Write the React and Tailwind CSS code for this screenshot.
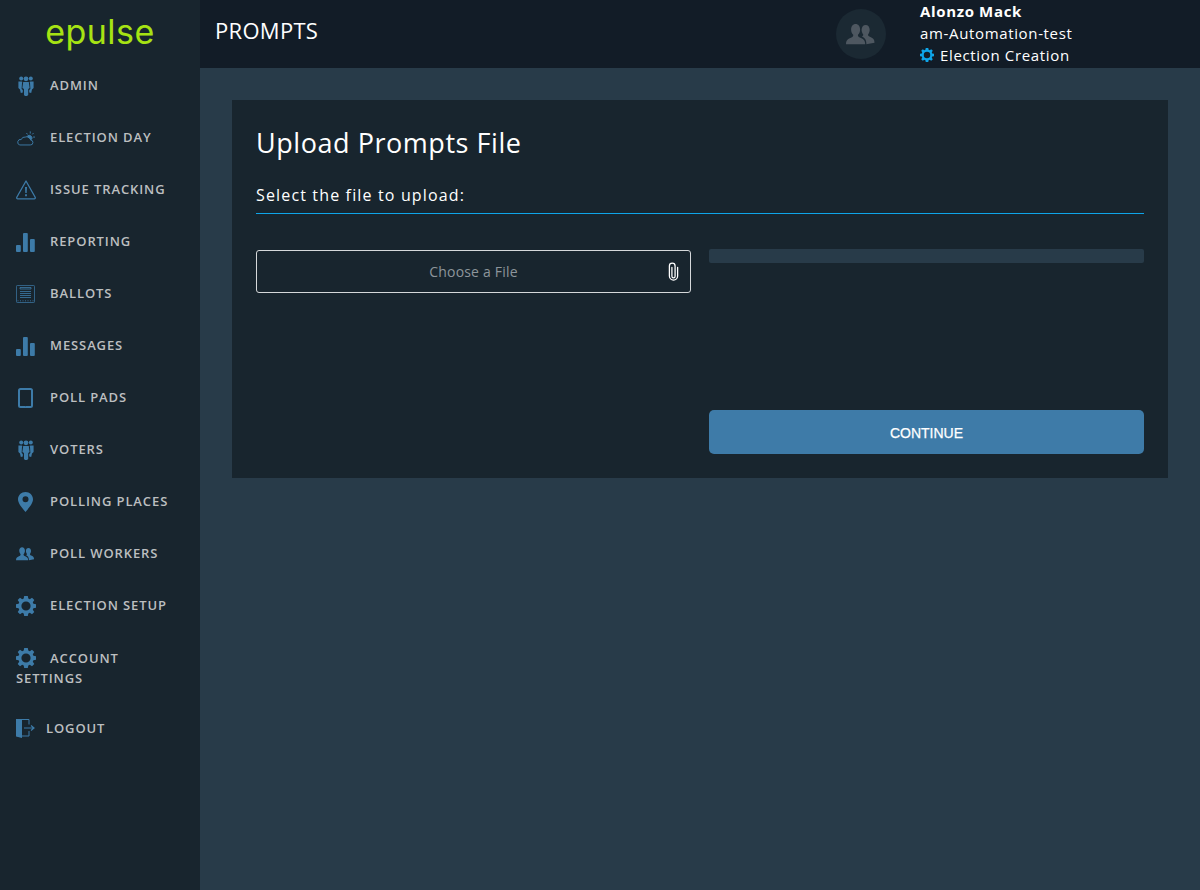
import React from "react";

function Gear({ className }) {
  return (
    <svg viewBox="0 0 20 20" className={className} fill="currentColor">
      <path
        fillRule="evenodd"
        d="M8.200 0h3.600l.5 2.600 1.500.6L16 1.700l2.300 2.300-1.500 2.200.6 1.500 2.600.5v3.600l-2.600.5-.6 1.500 1.500 2.200-2.300 2.300-2.200-1.500-1.500.6-.5 2.600H8.200l-.5-2.600-1.500-.6L4 18.300 1.700 16l1.500-2.200-.6-1.500L0 11.800V8.200l2.600-.5.6-1.500L1.700 4 4 1.700l2.200 1.500 1.500-.6zM10 5.400a4.600 4.600 0 1 0 0 9.200 4.600 4.600 0 0 0 0-9.200z"
      />
    </svg>
  );
}

function Group({ className }) {
  return (
    <svg viewBox="0 0 20 14" className={className} fill="currentColor">
      <path d="M0 13.500c0-3 1.500-3.600 3.600-4.500 1-.4 1.400-1 1.200-1.800C3.900 6.200 3.400 5 3.400 3.600 3.400 1.400 4.700 0 6.400 0s3 1.400 3 3.600c0 1.400-.5 2.600-1.400 3.600-.2.8.2 1.400 1.200 1.800 2.100.9 3.600 1.500 3.600 4.500z" />
      <path d="M13.600 13.500c0-2.900-.9-4.200-3-5.200.6-.3 1-.7.9-1.300-.7-.8-1.100-1.900-1.100-3.100 0-2 1.100-3.300 2.700-3.300s2.700 1.300 2.700 3.300c0 1.200-.4 2.300-1.100 3.100-.1.700.3 1.100 1.200 1.500 1.900.8 3.100 1.400 3.100 4z" />
    </svg>
  );
}

function Crowd({ className }) {
  return (
    <svg viewBox="0 0 16 20" className={className} fill="currentColor">
      <circle cx="3.200" cy="2.600" r="2" />
      <circle cx="12.800" cy="2.600" r="2" />
      <circle cx="8" cy="2.800" r="2.400" />
      <path d="M5.200 6h5.600l.8 6-1.400 1v6l-1.200 1H7l-1-1v-6l-1.600-1z" />
      <path d="M.4 5.500h3.200l.8.6-.4 1L3.600 13l1.200 1v2.500l-2 .5-.8-3.500L.4 12z" />
      <path d="M15.600 5.500h-3.200l-.8.6.4 1 .4 5.900-1.200 1v2.500l2 .5.8-3.500 1.600-1.500z" />
    </svg>
  );
}

function Cloud({ className }) {
  return (
    <svg viewBox="0 0 20 15" className={className} fill="none" stroke="currentColor" strokeWidth="1">
      <path d="M4 14.300h11a2.600 2.600 0 0 0 .4-5.200A3.900 3.900 0 0 0 9.800 6 3.900 3.900 0 0 0 5.500 8.600 2.900 2.900 0 0 0 4 14.300z" />
      <path fill="currentColor" d="M12.500 4.500a3 3 0 0 1 4.200 3.600l-1.300.6a3.800 3.800 0 0 0-2.900-2.500z" />
      <path d="M15 0v2.300M18.500 1.700l-1.400 1.500M20 6h-2M11 1.700l1.100 1.500" />
    </svg>
  );
}

function Warning({ className }) {
  return (
    <svg viewBox="0 0 20 20" className={className} fill="none">
      <path stroke="currentColor" strokeWidth="1.300" strokeLinejoin="round" d="M10 1 .8 17.200c-.3.8.1 1.600 1 1.600h16.400c.9 0 1.300-.8 1-1.600z" />
      <path fill="currentColor" d="M9 7h2l-.3 6H9.300zM9.100 14.300h1.800v2H9.100z" />
    </svg>
  );
}

function Bars({ className }) {
  return (
    <svg viewBox="0 0 19 19" className={className} fill="currentColor">
      <rect x="0" y="12" width="4.800" height="7" rx="1" />
      <rect x="7" y="0" width="4.800" height="19" rx="1" />
      <rect x="14" y="6" width="4.800" height="13" rx="1" />
    </svg>
  );
}

function Ballot({ className }) {
  return (
    <svg viewBox="0 0 19 18" className={className} fill="none" stroke="currentColor" strokeWidth="0.8">
      <rect x="0.400" y="0.400" width="18.200" height="17.200" rx="1.200" />
      <path d="M4 2.500h11v1.500H4zM4 6.500h11M4 8.500h11M4 10.500h11M4 12.500h11" />
      <path strokeDasharray="1 1.500" d="M1.500 15.800h16" />
    </svg>
  );
}

function Tablet({ className }) {
  return (
    <svg viewBox="0 0 15 20" className={className} fill="none">
      <rect x="1" y="1" width="13" height="18" rx="1.500" stroke="currentColor" strokeWidth="2" />
      <circle cx="7.500" cy="17.500" r="0.800" fill="#18252e" />
    </svg>
  );
}

function Pin({ className }) {
  return (
    <svg viewBox="0 0 15 20" className={className} fill="currentColor">
      <path fillRule="evenodd" d="M7.500 0C3.300 0 0 3.200 0 7.300 0 12 5.300 17.200 7.500 20 9.700 17.200 15 12 15 7.300 15 3.200 11.700 0 7.500 0zm0 4.300a3 3 0 1 1 0 6 3 3 0 0 1 0-6z" />
    </svg>
  );
}

function Logout({ className }) {
  return (
    <svg viewBox="0 0 19 19" className={className}>
      <path fill="currentColor" d="M0 0h6v19l-6-1.500z" />
      <path fill="none" stroke="currentColor" strokeWidth="1" d="M6 .5h7v5M13 12v5H6" />
      <path fill="none" stroke="currentColor" strokeWidth="1.200" d="M8 9h10M15 6.500 18 9l-3 2.500" />
    </svg>
  );
}

function Clip({ className }) {
  return (
    <svg viewBox="0 0 10 18" className={className} fill="none" stroke="currentColor" strokeWidth="1.200" strokeLinecap="round">
      <path d="M3.500 5v8.500a1.500 1.500 0 0 0 3 0V3.800a2.700 2.700 0 0 0-5.400 0v9.400a3.900 3.900 0 0 0 7.800 0V5" />
    </svg>
  );
}

const navItems = [
  { label: "ADMIN", icon: Crowd, iconClass: "w-[16px] h-[20px] ml-[2px] mr-[16px]" },
  { label: "ELECTION DAY", icon: Cloud, iconClass: "w-[19px] h-[15px] mr-[15px]" },
  { label: "ISSUE TRACKING", icon: Warning, iconClass: "w-[20px] h-[20px] mr-[14px]" },
  { label: "REPORTING", icon: Bars, iconClass: "w-[19px] h-[19px] mr-[15px]" },
  { label: "BALLOTS", icon: Ballot, iconClass: "w-[19px] h-[18px] mr-[15px]" },
  { label: "MESSAGES", icon: Bars, iconClass: "w-[19px] h-[19px] mr-[15px]" },
  { label: "POLL PADS", icon: Tablet, iconClass: "w-[15px] h-[20px] ml-[2px] mr-[17px]" },
  { label: "VOTERS", icon: Crowd, iconClass: "w-[16px] h-[20px] ml-[2px] mr-[16px]" },
  { label: "POLLING PLACES", icon: Pin, iconClass: "w-[15px] h-[20px] ml-[2px] mr-[17px]" },
  { label: "POLL WORKERS", icon: Group, iconClass: "w-[19px] h-[14px] mr-[15px]" },
  { label: "ELECTION SETUP", icon: Gear, iconClass: "w-[20px] h-[20px] mr-[14px]" },
];

function NavItem({ item }) {
  const Icon = item.icon;
  return (
    <div className="flex h-[52px] items-center pl-[16px] text-[13px] font-semibold tracking-[0.9px] text-[#bcbfc0]">
      <Icon className={`${item.iconClass} shrink-0 text-[#3d7ba8]`} />
      <span>{item.label}</span>
    </div>
  );
}

export default function App() {
  return (
    <div className="flex h-[890px] w-[1200px] overflow-hidden bg-[#283b49] font-['Open_Sans',sans-serif]">
      <aside className="w-[200px] shrink-0 bg-[#18252e]">
        <div className="flex h-[60px] items-start justify-center pt-[12px]">
          <span className="font-['Inter',sans-serif] text-[34px] leading-[40px] font-normal tracking-[0.5px] text-[#a6e313]">
            epulse
          </span>
        </div>
        {navItems.map((item) => (
          <NavItem key={item.label} item={item} />
        ))}
        <div className="px-[16px] pt-[16px] text-[13px] leading-[20px] font-semibold tracking-[0.9px] text-[#bcbfc0]">
          <Gear className="mr-[14px] inline-block h-[20px] w-[20px] align-top text-[#3d7ba8]" />
          ACCOUNT SETTINGS
        </div>
        <div className="mt-[31px] flex items-center pl-[16px] text-[13px] font-semibold tracking-[0.9px] text-[#bcbfc0]">
          <Logout className="mr-[11px] h-[19px] w-[19px] text-[#3d7ba8]" />
          <span>LOGOUT</span>
        </div>
      </aside>

      <div className="flex min-w-0 flex-1 flex-col">
        <header className="flex h-[68px] shrink-0 items-center bg-[#121c27] pl-[15px]">
          <h1 className="flex-1 pb-[8px] text-[22px] leading-[30px] tracking-[0.3px] text-white">PROMPTS</h1>
          <div className="mr-[34px] flex h-[50px] w-[50px] items-center justify-center rounded-full bg-[#1b2933]">
            <Group className="h-[21px] w-[30px] text-[#4e5760]" />
          </div>
          <div className="mb-[2px] w-[280px] text-[15px] leading-[22px] tracking-[0.65px] text-white">
            <div className="font-bold">Alonzo Mack</div>
            <div>am-Automation-test</div>
            <div className="flex items-center">
              <Gear className="mr-[6px] h-[14px] w-[14px] text-[#0ea5e9]" />
              Election Creation
            </div>
          </div>
        </header>

        <main className="flex-1 px-[32px] pt-[32px]">
          <section className="h-[378px] bg-[#18252e] px-[24px]">
            <h2 className="pt-[24px] text-[27px] leading-[38px] tracking-[0.55px] text-white">Upload Prompts File</h2>
            <div className="mt-[22px] border-b border-[#0ea5e9] pb-[7px] text-[16px] leading-[22px] tracking-[1.15px] text-white">
              Select the file to upload:
            </div>
            <div className="mt-[36px] flex gap-[18px]">
              <div className="flex h-[43px] w-[435px] items-center rounded-[3px] border border-[#d5d8da] pr-[11px] pl-[22px] text-[14px] tracking-[0.2px] text-[#8d959b]">
                <span className="flex-1 text-center">Choose a File</span>
                <Clip className="h-[19px] w-[11px] text-white" />
              </div>
              <div className="-mt-px h-[14px] w-[435px] rounded-[2px] bg-[#283b49]" />
            </div>
            <div className="mt-[117px] flex justify-end">
              <button className="h-[44px] w-[435px] rounded-[5px] bg-[#3e7ba8] pt-[2px] font-['Liberation_Sans',sans-serif] text-[14px] text-white [-webkit-text-stroke:0.25px_white]">
                CONTINUE
              </button>
            </div>
          </section>
        </main>
      </div>
    </div>
  );
}
